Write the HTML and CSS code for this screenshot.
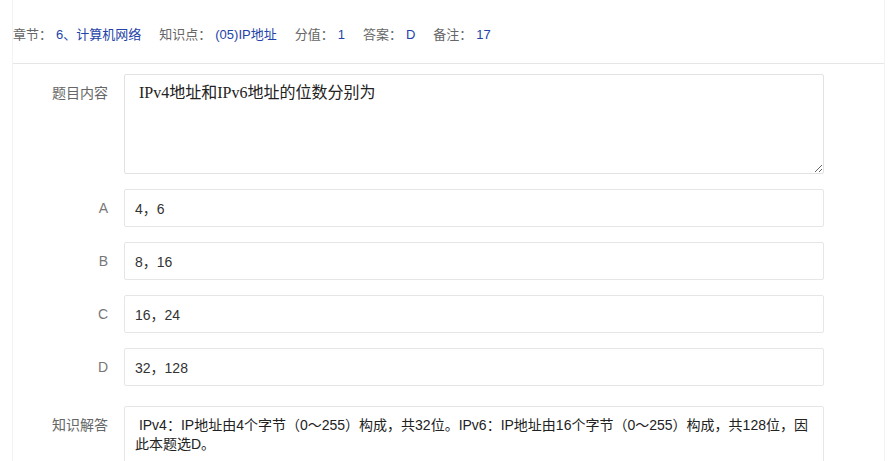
FILE: index.html
```html
<!DOCTYPE html>
<html lang="zh-CN">
<head>
    <meta charset="UTF-8">
    <title>题目详情</title>
    <link rel="stylesheet" href="styles.css">
</head>
<body>

<div class="page">
    <div class="meta">
        <span class="meta-item"><span class="meta-label">章节：</span><span class="meta-value">6、计算机网络</span></span>
        <span class="meta-item"><span class="meta-label">知识点：</span><span class="meta-value">(05)IP地址</span></span>
        <span class="meta-item"><span class="meta-label">分值：</span><span class="meta-value">1</span></span>
        <span class="meta-item"><span class="meta-label">答案：</span><span class="meta-value">D</span></span>
        <span class="meta-item"><span class="meta-label">备注：</span><span class="meta-value">17</span></span>
    </div>

    <div class="form">
        <div class="row">
            <label class="row-label">题目内容</label>
            <textarea class="field question">IPv4地址和IPv6地址的位数分别为</textarea>
        </div>
        <div class="row">
            <label class="row-label option">A</label>
            <input class="field" type="text" value="4，6">
        </div>
        <div class="row">
            <label class="row-label option">B</label>
            <input class="field" type="text" value="8，16">
        </div>
        <div class="row">
            <label class="row-label option">C</label>
            <input class="field" type="text" value="16，24">
        </div>
        <div class="row">
            <label class="row-label option">D</label>
            <input class="field" type="text" value="32，128">
        </div>
        <div class="row answer-row">
            <label class="row-label">知识解答</label>
            <div class="field answer">&nbsp;IPv4：IP地址由4个字节（0～255）构成，共32位。IPv6：IP地址由16个字节（0～255）构成，共128位，因此本题选D。</div>
        </div>
    </div>
</div>

</body>
</html>
```

FILE: styles.css
```css
body {
    margin: 0;
    background: #fff;
    font-family: "Liberation Sans", "Noto Sans CJK SC", sans-serif;
    color: #333;
}

.page {
    margin-left: 12px;
    width: 871px;
    min-height: 461px;
    border-left: 1px solid #f3f3f3;
    border-right: 1px solid #f3f3f3;
}

/* 顶部信息 */
.meta {
    height: 59px;
    padding-top: 4px;
    display: flex;
    align-items: center;
    border-bottom: 1px solid #e6e6e6;
    font-size: 13px;
}

.meta-item {
    margin-right: 18px;
}

.meta-label {
    color: #666;
}

.meta-value {
    color: #2443a8;
    margin-left: 4px;
}

/* 表单 */
.form {
    padding-top: 10px;
}

.row {
    display: flex;
    align-items: flex-start;
    margin-bottom: 15px;
}

.answer-row {
    margin-top: 20px;
}

.row-label {
    width: 95px;
    margin-right: 16px;
    text-align: right;
    line-height: 38px;
    font-size: 14px;
    color: #666;
}

.row-label.option {
    color: #777;
}

.field {
    box-sizing: border-box;
    width: 700px;
    height: 38px;
    border: 1px solid #e6e6e6;
    border-radius: 2px;
    padding: 0 10px;
    font-family: "Liberation Sans", "Noto Sans CJK SC", sans-serif;
    font-size: 14px;
    color: #333;
    background: #fff;
    outline: none;
}

.question {
    height: 100px;
    padding: 6px 14px;
    font-family: "Liberation Serif", "Noto Sans CJK SC", serif;
    font-size: 16px;
    line-height: 24px;
    color: #222;
    border-color: #e2e2e2;
    resize: vertical;
}

.answer {
    height: auto;
    min-height: 80px;
    padding: 9px 10px;
    line-height: 19px;
    color: #222;
}
```
